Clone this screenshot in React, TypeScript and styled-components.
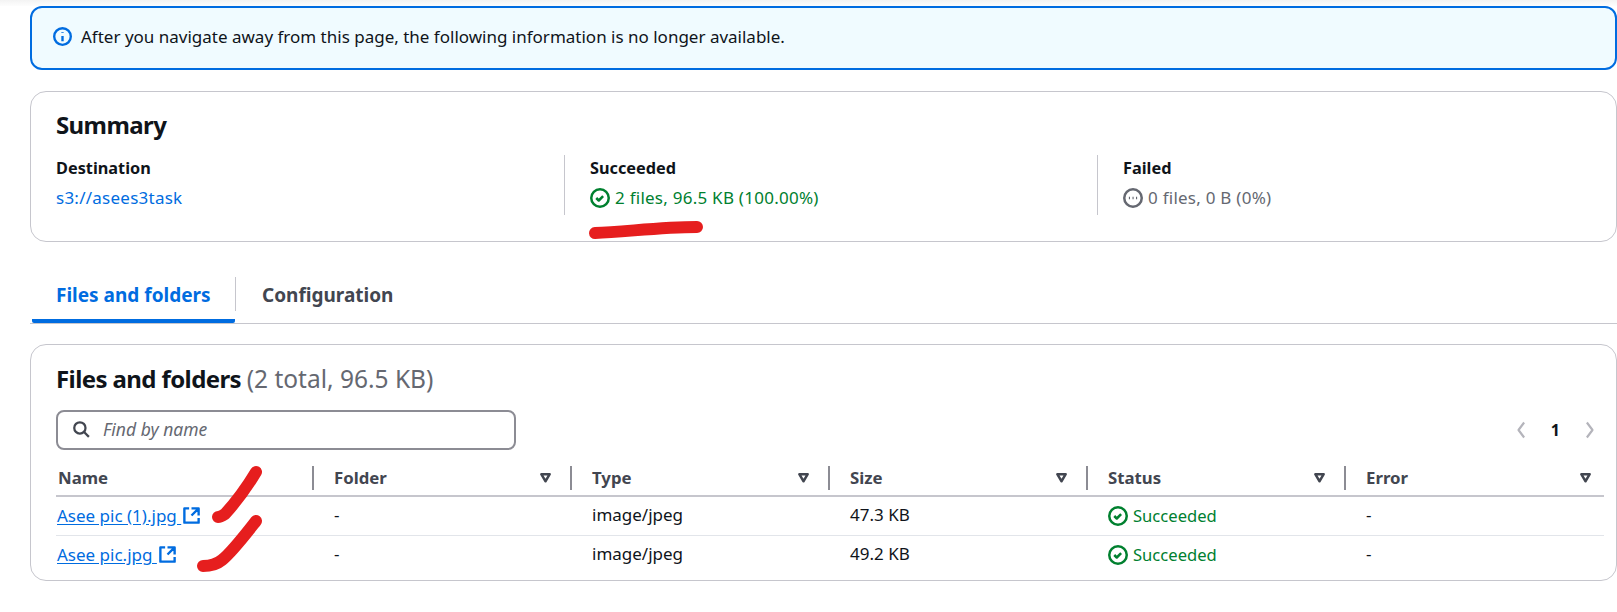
import React from "react";
import styled, { createGlobalStyle } from "styled-components";

const Global = createGlobalStyle`
  html, body { margin: 0; padding: 0; background: #fff; overflow: hidden; }
  body { font-family: "Noto Sans", "Open Sans", Arial, sans-serif; color: #0f141a; font-size: 17px; }
`;

const Page = styled.div`
  position: relative;
  width: 1617px;
  height: 612px;
  box-sizing: border-box;
  padding: 6px 0 0 30px;
  overflow: hidden;
`;
const TopShade = styled.div`
  position: absolute;
  left: 0;
  right: 0;
  top: 0;
  height: 6px;
  background: linear-gradient(#f3f3f3, #fdfdfd);
`;
const Alert = styled.div`
  box-sizing: border-box;
  height: 64px;
  display: flex;
  align-items: center;
  gap: 9px;
  padding: 0 0 4px 21px;
  background: #f0fbff;
  border: 2px solid #006ce0;
  border-radius: 12px;
  font-size: 17px;
`;
const Card = styled.section<{ $height: number }>`
  box-sizing: border-box;
  height: ${(p) => p.$height}px;
  border: 1px solid #c6c6cd;
  border-radius: 16px;
  background: #fff;
  padding: 0 12px 0 25px;
`;
const SummaryCard = styled(Card)`
  margin-top: 21px;
  padding-top: 17px;
`;
const Title = styled.h2`
  margin: 0;
  font-size: 24px;
  line-height: 32px;
  font-weight: 700;
  letter-spacing: -0.6px;
`;
const Muted = styled.span`
  font-weight: 400;
  font-size: 24.5px;
  letter-spacing: 0;
  color: #656871;
`;
const Columns = styled.div`
  display: grid;
  grid-template-columns: 508px 533px 1fr;
  margin-top: 14px;
`;
const Column = styled.div<{ $divided?: boolean }>`
  height: 60px;
  padding-left: ${(p) => (p.$divided ? 25 : 0)}px;
  border-left: ${(p) => (p.$divided ? "1px solid #c6c6cd" : "none")};
`;
const Label = styled.div`
  font-size: 16.3px;
  line-height: 22px;
  font-weight: 700;
  margin-top: 2px;
`;
const Value = styled.div<{ $tone: string }>`
  display: flex;
  align-items: center;
  gap: 5px;
  font-size: 17px;
  line-height: 24px;
  letter-spacing: 0.25px;
  margin-top: 7px;
  color: ${(p) => p.$tone};
`;
const PlainLink = styled.a`
  color: #006ce0;
`;
const Tabs = styled.div`
  display: flex;
  height: 47px;
  box-sizing: border-box;
  margin-top: 35px;
  border-bottom: 1px solid #c6c6cd;
`;
const Tab = styled.div<{ $active?: boolean }>`
  box-sizing: border-box;
  height: 46px;
  margin-left: ${(p) => (p.$active ? 2 : 0)}px;
  width: ${(p) => (p.$active ? 203 : 170)}px;
  padding: 0 0 0 ${(p) => (p.$active ? 24 : 26)}px;
  font-size: 19px;
  font-weight: 700;
  line-height: 36px;
  color: ${(p) => (p.$active ? "#006ce0" : "#424650")};
  border-bottom: ${(p) => (p.$active ? "4px solid #006ce0" : "none")};
  border-radius: 2px;
`;
const TabSeparator = styled.div`
  width: 1px;
  height: 34px;
  background: #c6c6cd;
`;
const FilesCard = styled(Card)`
  margin-top: 20px;
  padding-top: 18px;
`;
const Toolbar = styled.div`
  display: flex;
  justify-content: space-between;
  align-items: center;
  margin-top: 15px;
`;
const Search = styled.div`
  box-sizing: border-box;
  width: 460px;
  height: 40px;
  border: 2px solid #8c8c94;
  border-radius: 8px;
  display: flex;
  align-items: center;
  gap: 13px;
  padding: 0 0 2px 14px;
  font-size: 17.5px;
  font-style: italic;
  color: #656871;
`;
const Pager = styled.div`
  display: flex;
  align-items: center;
  gap: 20px;
  padding-right: 4px;
  font-size: 16px;
  font-weight: 700;
`;
const Table = styled.table`
  border-collapse: collapse;
  table-layout: fixed;
  width: 1548px;
  margin-top: 16px;
`;
const Th = styled.th`
  padding: 0 0 5px;
  border-bottom: 2px solid #c6c6cd;
  font-weight: 700;
`;
const ThInner = styled.div<{ $first?: boolean; $last?: boolean }>`
  display: flex;
  align-items: center;
  justify-content: space-between;
  height: 24px;
  padding: 0 ${(p) => (p.$last ? 11 : 17)}px 2px ${(p) => (p.$first ? 2 : 20)}px;
  box-sizing: border-box;
  border-right: ${(p) => (p.$last ? "none" : "2px solid #8c8c94")};
  font-size: 16.8px;
  color: #424650;
`;
const Tr = styled.tr`
  & + & td {
    border-top: 1px solid #e2e5ea;
  }
`;
const Td = styled.td<{ $first?: boolean }>`
  height: 36px;
  padding: 0 0 2px ${(p) => (p.$first ? 1 : 20)}px;
  font-size: 17px;
  line-height: 24px;
`;
const FileLink = styled.a`
  color: #006ce0;
  display: inline-flex;
  align-items: center;
  gap: 1px;
  vertical-align: middle;
`;
const FileName = styled.span`
  text-decoration: underline;
  text-underline-offset: 2px;
  white-space: pre;
`;
const Status = styled.span`
  display: inline-flex;
  align-items: center;
  gap: 5px;
  color: #00802f;
  font-size: 16.6px;
  vertical-align: middle;
`;
const Scribble = styled.svg`
  position: absolute;
  left: 0;
  top: 0;
  pointer-events: none;
`;

const Icon = ({ color, size = 18, sw = 2, children }: { color: string; size?: number; sw?: number; children: React.ReactNode }) => (
  <svg width={size} height={size} viewBox="0 0 16 16" fill="none" stroke={color} strokeWidth={sw} strokeLinejoin="round" style={{ flexShrink: 0 }}>
    {children}
  </svg>
);
const Positive = ({ color }: { color: string }) => (
  <Icon color={color} size={20}>
    <circle cx="8" cy="8" r="7" />
    <path d="m5 8 2 2 3.5-3.5" />
  </Icon>
);
const Filter = () => (
  <Icon color="#424650" size={15} sw={2.6}>
    <path d="M3.5 4.5h9L8 12z" />
  </Icon>
);
const External = () => (
  <Icon color="#006ce0" size={19}>
    <path d="M14 8V2H8M14 2 8 8M6 2H2v12h12v-4" />
  </Icon>
);

const heads = ["Name", "Folder", "Type", "Size", "Status", "Error"];
const rows = [
  { name: "Asee pic (1).jpg", size: "47.3 KB" },
  { name: "Asee pic.jpg", size: "49.2 KB" },
];

export default function App() {
  return (
    <Page>
      <Global />
      <TopShade />
      <Alert>
        <Icon color="#006ce0" size={19}>
          <circle cx="8" cy="8" r="7" />
          <path d="M8 12V7.5M8 4.5v.5" />
        </Icon>
        After you navigate away from this page, the following information is no longer available.
      </Alert>
      <SummaryCard $height={151}>
        <Title>Summary</Title>
        <Columns>
          <Column>
            <Label>Destination</Label>
            <Value $tone="#006ce0">
              <PlainLink>s3://asees3task</PlainLink>
            </Value>
          </Column>
          <Column $divided>
            <Label>Succeeded</Label>
            <Value $tone="#00802f">
              <Positive color="#00802f" />2 files, 96.5 KB (100.00%)
            </Value>
          </Column>
          <Column $divided>
            <Label>Failed</Label>
            <Value $tone="#656871">
              <Icon color="#656871" size={20}>
                <circle cx="8" cy="8" r="7" />
                <path d="M4.7 8h.9M7.6 8h.9M10.4 8h.9" />
              </Icon>
              0 files, 0 B (0%)
            </Value>
          </Column>
        </Columns>
      </SummaryCard>
      <Tabs>
        <Tab $active>Files and folders</Tab>
        <TabSeparator />
        <Tab>Configuration</Tab>
      </Tabs>
      <FilesCard $height={237}>
        <Title>
          Files and folders <Muted>(2 total, 96.5 KB)</Muted>
        </Title>
        <Toolbar>
          <Search>
            <Icon color="#424650" size={18}>
              <circle cx="7" cy="7" r="5" />
              <path d="m15 15-4.5-4.5" />
            </Icon>
            Find by name
          </Search>
          <Pager>
            <Icon color="#b4b4bb" size={20} sw={1.7}>
              <path d="M10.5 2 6 8l4.5 6" />
            </Icon>
            1
            <Icon color="#b4b4bb" size={20} sw={1.7}>
              <path d="M5.5 2 10 8l-4.5 6" />
            </Icon>
          </Pager>
        </Toolbar>
        <Table>
          <thead>
            <tr>
              {heads.map((h, i) => (
                <Th key={h}>
                  <ThInner $first={i === 0} $last={i === 5}>
                    {h}
                    {i > 0 && <Filter />}
                  </ThInner>
                </Th>
              ))}
            </tr>
          </thead>
          <tbody>
            {rows.map((r) => (
              <Tr key={r.name}>
                <Td $first>
                  <FileLink>
                    <FileName>{r.name + " "}</FileName>
                    <External />
                  </FileLink>
                </Td>
                <Td>-</Td>
                <Td>image/jpeg</Td>
                <Td>{r.size}</Td>
                <Td>
                  <Status>
                    <Positive color="#00802f" />
                    Succeeded
                  </Status>
                </Td>
                <Td>-</Td>
              </Tr>
            ))}
          </tbody>
        </Table>
      </FilesCard>
      <Scribble width="1617" height="612" fill="none" stroke="#e61e1e" strokeWidth="12" strokeLinecap="round" strokeLinejoin="round">
        <path d="M595 233C625 232 660 227 697 227" />
        <path d="M256 472C247 487 235 503 225 514C222 516 220 517 218 517" />
        <path d="M256 521C245 535 232 552 222 560C216 565 210 566 203 566" />
      </Scribble>
    </Page>
  );
}
